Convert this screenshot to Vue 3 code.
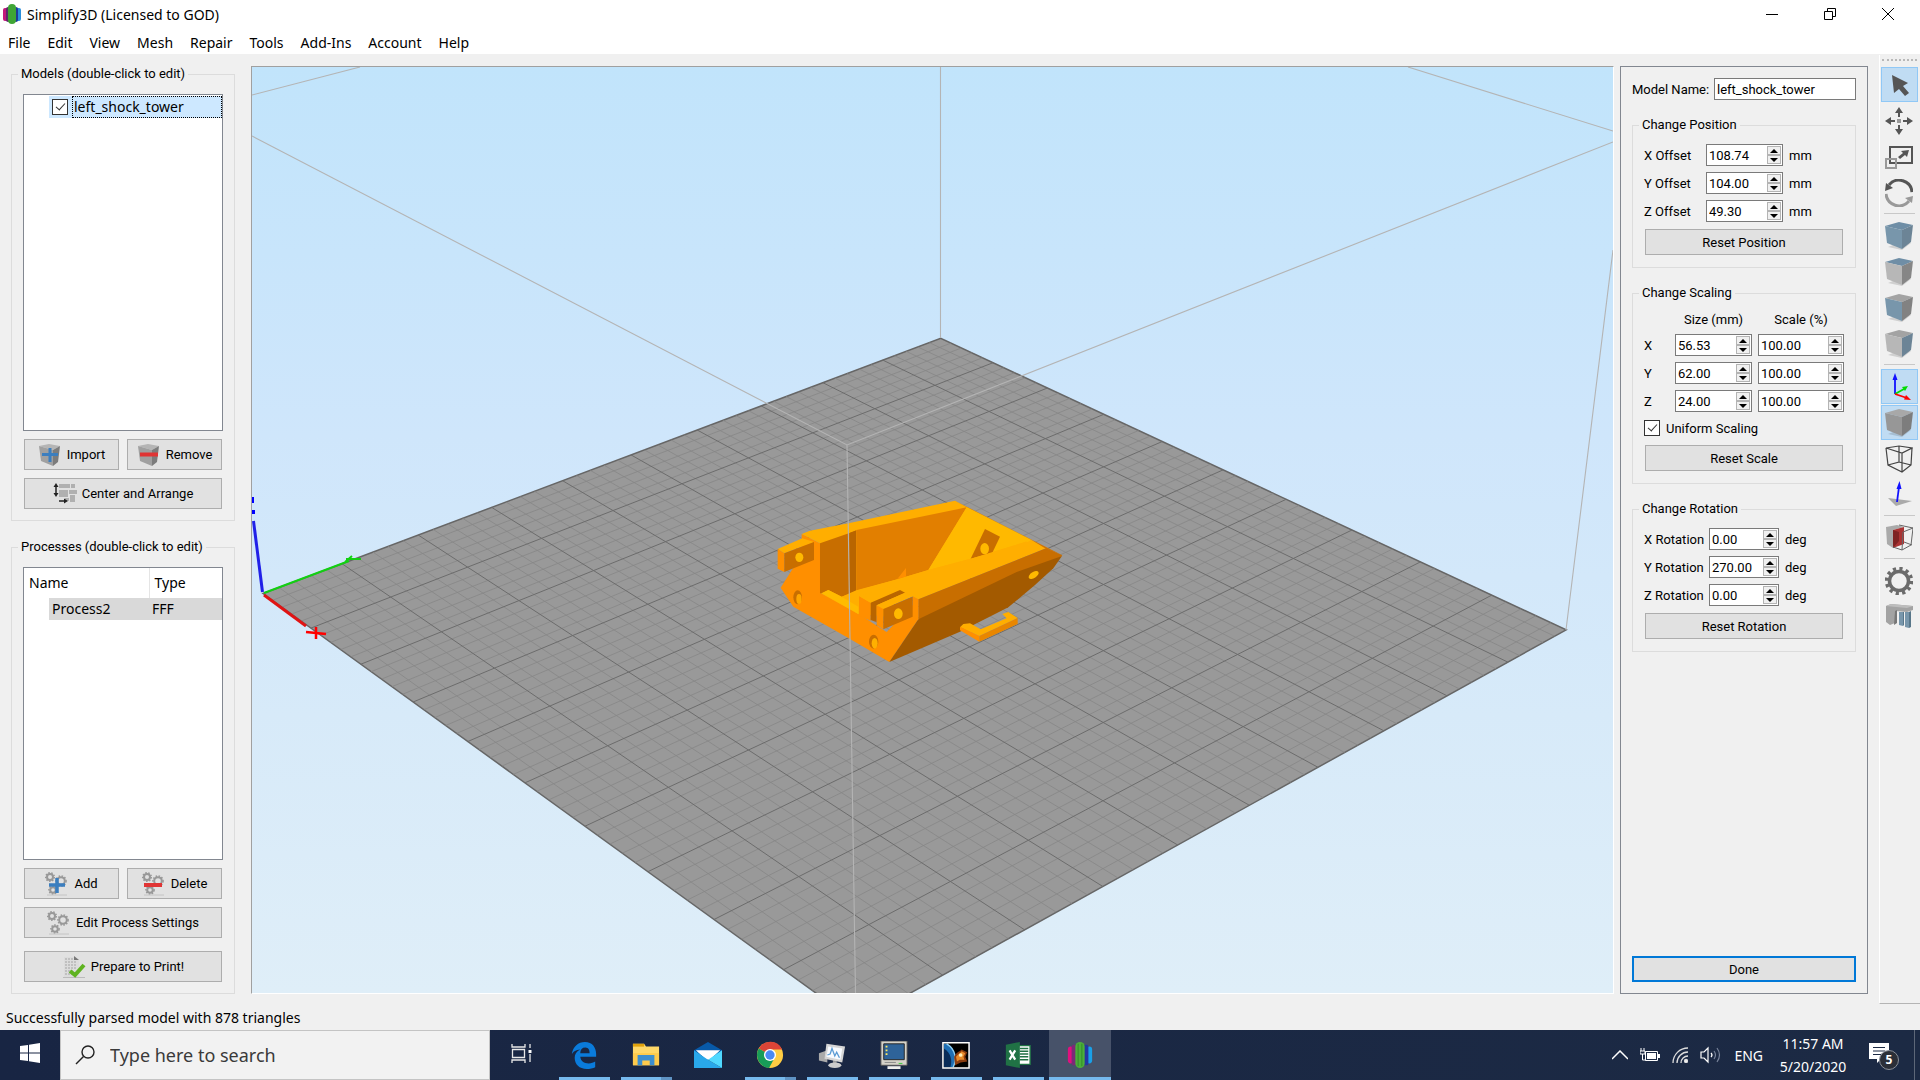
<script setup>
import { ref, reactive } from 'vue'

const menus = ['File', 'Edit', 'View', 'Mesh', 'Repair', 'Tools', 'Add-Ins', 'Account', 'Help']

const modelName = ref('left_shock_tower')
const modelVisible = ref(true)
const uniform = ref(true)
const search = ref('')

const offsets = reactive([
  { axis: 'X', value: '108.74' },
  { axis: 'Y', value: '104.00' },
  { axis: 'Z', value: '49.30' }
])
const scales = reactive([
  { axis: 'X', size: '56.53', scale: '100.00' },
  { axis: 'Y', size: '62.00', scale: '100.00' },
  { axis: 'Z', size: '24.00', scale: '100.00' }
])
const rotations = reactive([
  { axis: 'X', value: '0.00' },
  { axis: 'Y', value: '270.00' },
  { axis: 'Z', value: '0.00' }
])

function step(row, key, delta) {
  row[key] = (Number(row[key]) + delta).toFixed(2)
}

function reset(rows, key, value) {
  rows.forEach(r => { r[key] = value })
}

// toolbar
const tools = [
  { id: 'select', title: 'Select', on: true },
  { id: 'move', title: 'Move' },
  { id: 'scale', title: 'Scale' },
  { id: 'rotate', title: 'Rotate', sep: true },
  { id: 'cube', title: 'Default view', top: '#6f8ea6', left: '#7896ab', right: '#6c8496' },
  { id: 'cube', title: 'Top view', top: '#6f8ea6', left: '#b7b7b7', right: '#868686' },
  { id: 'cube', title: 'Front view', top: '#a3a3a3', left: '#7896ab', right: '#828282' },
  { id: 'cube', title: 'Side view', top: '#a3a3a3', left: '#b7b7b7', right: '#6c8496', sep: true },
  { id: 'axes', title: 'Coordinate axes', on: true },
  { id: 'cube', title: 'Solid model', on: true, top: '#a8a8a8', left: '#979797', right: '#7d7d7d' },
  { id: 'wire', title: 'Wireframe' },
  { id: 'normal', title: 'Normals', sep: true },
  { id: 'section', title: 'Cross section', sep: true },
  { id: 'gear', title: 'Machine control' },
  { id: 'support', title: 'Supports' }
]

const apps = [
  { id: 'edge', open: true },
  { id: 'files', open: true, more: true },
  { id: 'mail' },
  { id: 'chrome', open: true, more: true },
  { id: 'monitor', open: true },
  { id: 'remote', open: true },
  { id: 'photo', open: true },
  { id: 'excel', open: true },
  { id: 'simplify', open: true, active: true }
]

// build plate corners on screen: origin, +x, +x+y, +y
const corners = [[263, 593.5], [856.9, 1022.7], [1566.2, 629.8], [940.7, 338.3]]

function project(u, v) {
  const [[x0, y0], [x1, y1], [x2, y2], [x3, y3]] = corners
  const dx1 = x1 - x2, dx2 = x3 - x2, sx = x0 - x1 + x2 - x3
  const dy1 = y1 - y2, dy2 = y3 - y2, sy = y0 - y1 + y2 - y3
  const det = dx1 * dy2 - dx2 * dy1
  const g = (sx * dy2 - dx2 * sy) / det
  const h = (dx1 * sy - sx * dy1) / det
  const w = g * u + h * v + 1
  const x = ((x1 - x0 + g * x1) * u + (x3 - x0 + h * x3) * v + x0) / w
  const y = ((y1 - y0 + g * y1) * u + (y3 - y0 + h * y3) * v + y0) / w
  return `${x.toFixed(1)} ${y.toFixed(1)}`
}

function gridPath(major) {
  let d = ''
  for (let i = 1; i < 50; i++) {
    if ((i % 5 === 0) !== major) continue
    const t = i / 50
    d += `M${project(t, 0)}L${project(t, 1)}M${project(0, t)}L${project(1, t)}`
  }
  return d
}

const plate = corners.map(c => c.join(',')).join(' ')
const minorGrid = gridPath(false)
const majorGrid = gridPath(true)

const gears = [[5, 5, 3], [16, 9, 3.8], [8, 18, 2.8]]
</script>

<template>
  <div class="app">
    <header class="titlebar">
      <svg class="logo" viewBox="0 0 18 20">
        <rect x="0" y="4" width="5" height="13" rx="2" fill="#c2187a" />
        <rect x="3" y="3" width="4" height="15" rx="2" fill="#5d2a6b" />
        <rect x="13" y="4" width="5" height="13" rx="2" fill="#2b8fdc" />
        <rect x="11" y="3" width="4" height="15" rx="2" fill="#1f3a98" />
        <rect x="5" y="0" width="8" height="20" rx="4" fill="#3fa535" />
      </svg>
      <span class="title">Simplify3D (Licensed to GOD)</span>
      <div class="window-buttons">
        <button type="button" aria-label="Minimize"><svg viewBox="0 0 12 12"><path d="M0 6.500h12" /></svg></button>
        <button type="button" aria-label="Restore"><svg viewBox="0 0 12 12"><path d="M.5 3.500h8v8h-8zM3.500 3.500v-3h8v8h-3" /></svg></button>
        <button type="button" aria-label="Close"><svg viewBox="0 0 12 12"><path d="M0 0l12 12M12 0L0 12" /></svg></button>
      </div>
    </header>

    <nav class="menubar">
      <button v-for="m in menus" :key="m" type="button">{{ m }}</button>
    </nav>

    <main class="main">
      <aside class="sidebar">
        <fieldset class="group fill">
          <legend>Models (double-click to edit)</legend>
          <div class="list">
            <div class="tree-row">
              <input id="model-0" v-model="modelVisible" type="checkbox" class="check">
              <label for="model-0">left_shock_tower</label>
            </div>
          </div>
          <div class="btn-row">
            <button type="button" class="btn tall">
              <svg class="btn-icon" viewBox="0 0 24 24">
                <path d="M1 3l10-2 11 2-7 4z" fill="#b5b5b5" /><path d="M1 3l14 4v16L3 18z" fill="#a0a0a0" /><path d="M22 3l-7 4v16l5-4z" fill="#7c7c7c" />
                <path d="M12 5v14M4 11.500h16" stroke="#3b7ebf" stroke-width="3" />
              </svg>
              Import
            </button>
            <button type="button" class="btn tall">
              <svg class="btn-icon" viewBox="0 0 24 24">
                <path d="M1 3l10-2 11 2-7 4z" fill="#b5b5b5" /><path d="M1 3l14 4v16L3 18z" fill="#a0a0a0" /><path d="M22 3l-7 4v16l5-4z" fill="#7c7c7c" />
                <path d="M3 11.500h18" stroke="#e03434" stroke-width="4" />
              </svg>
              Remove
            </button>
          </div>
          <button type="button" class="btn tall">
            <svg class="btn-icon" viewBox="0 0 24 24">
              <path d="M6 2h11v4H6zM18 2h4v4h-4zM6 8h9v7H6zM16 8h8v4h-8zM12 16h4v3h-4zM17 13h5v7h-5z" fill="#b0b0b0" />
              <path d="M3 4v9M6 19h6" stroke="#222" stroke-width="1.500" />
              <path d="M3 1l2.500 4h-5zM3 15l2.500-4h-5zM15 19l-4-2.500v5z" fill="#222" />
            </svg>
            Center and Arrange
          </button>
        </fieldset>

        <fieldset class="group fill">
          <legend>Processes (double-click to edit)</legend>
          <div class="list">
            <table class="processes">
              <thead>
                <tr><th>Name</th><th>Type</th></tr>
              </thead>
              <tbody>
                <tr><td><span>Process2</span></td><td><span>FFF</span></td></tr>
              </tbody>
            </table>
          </div>
          <div class="btn-row">
            <button type="button" class="btn tall">
              <svg class="btn-icon" viewBox="0 0 24 24">
                <g v-for="[x, y, r] in gears" :key="x" class="cog">
                  <circle :cx="x" :cy="y" :r="r" /><circle class="teeth" :cx="x" :cy="y" :r="r + 1.3" />
                </g>
                <path d="M2 23h20" stroke="#c4c4c4" />
                <path d="M12 6v15M4 13h16" stroke="#3b7ebf" stroke-width="3.500" />
              </svg>
              Add
            </button>
            <button type="button" class="btn tall">
              <svg class="btn-icon" viewBox="0 0 24 24">
                <g v-for="[x, y, r] in gears" :key="x" class="cog">
                  <circle :cx="x" :cy="y" :r="r" /><circle class="teeth" :cx="x" :cy="y" :r="r + 1.3" />
                </g>
                <path d="M2 23h20" stroke="#c4c4c4" />
                <path d="M2 13h18" stroke="#e03434" stroke-width="4" />
              </svg>
              Delete
            </button>
          </div>
          <button type="button" class="btn tall">
            <svg class="btn-icon" viewBox="0 0 24 24">
              <g v-for="[x, y, r] in gears" :key="x" class="cog">
                <circle :cx="x" :cy="y" :r="r" /><circle class="teeth" :cx="x" :cy="y" :r="r + 1.3" />
              </g>
              <path d="M2 23h20" stroke="#c4c4c4" />
            </svg>
            Edit Process Settings
          </button>
          <button type="button" class="btn tall prepare">
            <svg class="btn-icon" viewBox="0 0 24 24">
              <path d="M2 2h11l4 4v16H2z" fill="#dcdcdc" />
              <path d="M3 4h8M3 7h12M3 10h12M3 13h12M3 16h9M3 19h9" stroke="#a4a4a4" stroke-dasharray="2 1" />
              <path d="M12 1l5 4h-5z" fill="#777" />
              <path d="M1 22.500h22" stroke="#bbb" />
              <path d="M8 16l5 4 9-10" fill="none" stroke="#5fb321" stroke-width="4" />
            </svg>
            Prepare to Print!
          </button>
        </fieldset>
      </aside>

      <section class="viewport">
        <svg viewBox="252 67 1361 926" preserveAspectRatio="xMidYMid slice">
          <defs>
            <linearGradient id="sky" x1="0" y1="0" x2="0" y2="1">
              <stop offset="0" stop-color="#c1e4fb" />
              <stop offset=".4" stop-color="#cfe6fb" />
              <stop offset=".7" stop-color="#d7eaf9" />
              <stop offset="1" stop-color="#dfeef8" />
            </linearGradient>
          </defs>
          <rect x="252" y="67" width="1361" height="926" fill="url(#sky)" />

          <!-- build plate -->
          <polygon :points="plate" fill="#999" stroke="#666" stroke-width="1.500" />
          <path :d="minorGrid" fill="none" stroke="#868686" stroke-width=".8" />
          <path :d="majorGrid" fill="none" stroke="#6c6c6c" />

          <!-- back edges of the build volume -->
          <path class="volume" d="M940.500 67V338M252 95L360 67M1408 67l205 64M1566 630L1613 250" />

          <!-- model -->
          <g transform="translate(740 460) scale(.33333)">
            <path fill="#ff8f00" d="M185 222L240 250V398L305 430L440 516L535 418V478L448 606L325 534L160 440L122 383L157 328L185 300Z" />
            <path fill="#ffae00" d="M185 222L210 212L340 187L645 122L682 142L915 265L535 418L480 390L440 470L355 462L240 398V250Z" />
            <path fill="#c86e00" d="M240 250L348 212V395L305 410L265 390L245 400H240Z" />
            <path fill="#b96500" d="M330 218L349 211V392L330 400Z" />
            <path fill="#e27f00" d="M349 210L680 142L565 330L475 357L349 392Z" />
            <path fill="#ff8f00" d="M472 357L498 324V350Z" />
            <path fill="#ffb900" d="M680 142L875 240L692 296L565 330Z" />
            <path fill="#c86e00" d="M735 207L780 230L757 278L692 296Z" />
            <ellipse cx="734" cy="266" rx="13" ry="17" fill="#ffb900" />
            <path fill="#ffae00" d="M349 391L475 357L565 330L692 296L875 240L918 265L535 418L480 390L357 408L355 462L305 410Z" />
            <path fill="#ffbb00" d="M265 390L305 410L355 440V462L245 400Z" />
            <path fill="#ffb900" d="M682 142L875 240L862 246L680 145Z" />
            <path fill="#d27400" d="M645 122L967 286L915 265L875 240L682 142Z" />
            <path fill="#c86e00" d="M535 418L918 265L967 286L960 292L830 340L535 480Z" />
            <path fill="#a35a00" d="M535 478L830 336L966 288L940 325L885 375L805 442L660 515L448 606Z" />
            <path fill="#ff8f00" d="M357 408L392 428V482L357 468Z" />
            <path fill="#ffae00" d="M357 408L460 378L518 408L430 447L392 428Z" />
            <path fill="#b96500" d="M392 428L480 390L495 398L410 436V486L392 480Z" />
            <path fill="#ffae00" d="M410 436L495 398L518 409L430 447Z" />
            <path fill="#ff8f00" d="M410 436L430 447V508L410 496ZM518 409L535 418V480L518 470Z" />
            <path fill="#c86e00" d="M430 447L518 410V470L430 508Z" />
            <ellipse cx="475" cy="461" rx="13" ry="16" fill="#ffb900" />
            <path fill="#ffae00" d="M113 267L187 235L222 246L133 280Z" />
            <path fill="#ff8f00" d="M113 267L133 280V336L113 326Z" />
            <path fill="#c86e00" d="M133 280L222 246V300L133 336Z" />
            <ellipse cx="178" cy="292" rx="12" ry="14" fill="#ffb900" />
            <ellipse cx="173" cy="412" rx="13" ry="21" fill="#c86e00" />
            <ellipse cx="177" cy="417" rx="8" ry="15" fill="#ffa600" />
            <ellipse cx="401" cy="545" rx="14" ry="21" fill="#c86e00" />
            <ellipse cx="404" cy="550" rx="9" ry="16" fill="#ffb000" />
            <ellipse cx="881" cy="345" rx="17" ry="9" transform="rotate(-33 881 345)" fill="#ffb900" />
            <path fill="#ffae00" d="M670 492L690 490L722 508L800 475L787 462L805 456L833 474L718 528L660 502Z" />
            <path fill="#e88600" d="M833 474V492L718 545V528Z" />
            <path fill="#ff8f00" d="M718 528V545L660 511V500Z" />
          </g>

          <!-- front edges of the build volume -->
          <path class="volume" d="M252 136L847 445L1613 142M847 445L855.500 993" />

          <!-- axes -->
          <path d="M262.500 592L253.500 521" stroke="#2020e8" stroke-width="3" />
          <path d="M252 497v6M252 512h3" stroke="#00f" stroke-width="4" />
          <path d="M264 593L349 561M345 562l7-6M346 559h15" stroke="#12d012" stroke-width="2" />
          <path d="M264 595L306 626" stroke="#e01414" stroke-width="3" />
          <path d="M306 632l20 2M316 627v12" stroke="#f00" stroke-width="2.500" />
        </svg>
      </section>

      <section class="panel">
        <div class="name-row">
          <label for="model-name">Model Name:</label>
          <input id="model-name" v-model="modelName" type="text">
        </div>

        <fieldset class="group">
          <legend>Change Position</legend>
          <div v-for="row in offsets" :key="row.axis" class="field-row offset">
            <label :for="'offset-' + row.axis">{{ row.axis }} Offset</label>
            <div class="spin">
              <input :id="'offset-' + row.axis" v-model="row.value" type="text">
              <div class="arrows">
                <button type="button" aria-label="Up" @click="step(row, 'value', 1)"></button>
                <button type="button" aria-label="Down" @click="step(row, 'value', -1)"></button>
              </div>
            </div>
            <span>mm</span>
          </div>
          <button type="button" class="btn" @click="reset(offsets, 'value', '0.00')">Reset Position</button>
        </fieldset>

        <fieldset class="group">
          <legend>Change Scaling</legend>
          <div class="scale-row scale-head">
            <span></span><span>Size (mm)</span><span>Scale (%)</span>
          </div>
          <div v-for="row in scales" :key="row.axis" class="scale-row">
            <label :for="'size-' + row.axis">{{ row.axis }}</label>
            <div v-for="key in ['size', 'scale']" :key="key" class="spin">
              <input :id="key + '-' + row.axis" v-model="row[key]" type="text" :aria-label="row.axis + ' ' + key">
              <div class="arrows">
                <button type="button" aria-label="Up" @click="step(row, key, 1)"></button>
                <button type="button" aria-label="Down" @click="step(row, key, -1)"></button>
              </div>
            </div>
          </div>
          <div class="check-row">
            <input id="uniform" v-model="uniform" type="checkbox" class="check">
            <label for="uniform">Uniform Scaling</label>
          </div>
          <button type="button" class="btn" @click="reset(scales, 'scale', '100.00')">Reset Scale</button>
        </fieldset>

        <fieldset class="group">
          <legend>Change Rotation</legend>
          <div v-for="row in rotations" :key="row.axis" class="field-row rotation">
            <label :for="'rotation-' + row.axis">{{ row.axis }} Rotation</label>
            <div class="spin">
              <input :id="'rotation-' + row.axis" v-model="row.value" type="text">
              <div class="arrows">
                <button type="button" aria-label="Up" @click="step(row, 'value', 1)"></button>
                <button type="button" aria-label="Down" @click="step(row, 'value', -1)"></button>
              </div>
            </div>
            <span>deg</span>
          </div>
          <button type="button" class="btn" @click="reset(rotations, 'value', '0.00')">Reset Rotation</button>
        </fieldset>

        <button type="button" class="btn done">Done</button>
      </section>

      <div class="toolbar">
        <div class="grip"></div>
        <template v-for="(t, i) in tools" :key="i">
          <button type="button" :class="['tool', t.on && 'on']" :aria-label="t.title">
            <svg viewBox="0 0 28 28">
              <path v-if="t.id === 'select'" d="M7 4L23 12L18 15L24 22L20 25L14 18L9 22Z" fill="#555" />
              <g v-else-if="t.id === 'move'" fill="#555">
                <path d="M14 0l4 6h-3v4h-2V6h-3zM14 28l4-6h-3v-4h-2v4h-3zM0 14l6-4v3h4v2H6v3zM28 14l-6-4v3h-4v2h4v3z" />
                <path d="M12 12h4v4h-4z" fill="#999" />
              </g>
              <g v-else-if="t.id === 'scale'" fill="none" stroke-width="2">
                <path d="M5 4h22v16H5z" stroke="#555" />
                <path d="M1 16h10v9H1z" stroke="#999" />
                <path d="M24 7l-2 7-2-2-5 4-2-2 5-4-2-2z" fill="#555" />
              </g>
              <g v-else-if="t.id === 'rotate'" fill="none" stroke-width="3">
                <path d="M27 13A13 13 0 0 0 4 6" stroke="#555" />
                <path d="M1 15A13 13 0 0 0 24 22" stroke="#999" />
                <path d="M0 12l1-8 7 5z" fill="#555" stroke="none" /><path d="M28 17l-1 7-7-5z" fill="#999" stroke="none" />
              </g>
              <g v-else-if="t.id === 'cube'">
                <path d="M3 25l14 3 9-7-8-2z" fill="#0002" />
                <path d="M0 4L14 0L28 3L17 8Z" :fill="t.top" />
                <path d="M0 4L17 8V27L2 21Z" :fill="t.left" />
                <path d="M28 3L17 8V27L26 20Z" :fill="t.right" />
              </g>
              <g v-else-if="t.id === 'axes'" fill="none" stroke-width="1.800">
                <path d="M10 21V5" stroke="#11f" /><path d="M10 0l2.500 7h-5z" fill="#11f" />
                <path d="M10 21l9-5" stroke="#0d0" /><path d="M23 13l-3 5-3-4z" fill="#0d0" />
                <path d="M10 21l12 4" stroke="#f00" /><path d="M26 27l-7-.5 2-4.500z" fill="#f00" />
              </g>
              <path v-else-if="t.id === 'wire'" d="M1 3L14 1L27 3L17 8ZM1 3L3 20L17 27L26 20L27 3M17 8V27M14 1V17L3 20M14 17L26 20" fill="none" stroke="#444" stroke-width="1.200" />
              <g v-else-if="t.id === 'normal'">
                <path d="M3 17L27 20L11 25Z" fill="#aaa" />
                <path d="M12 21L14 6" stroke="#11f" stroke-width="1.800" /><path d="M14.500 0l2 8h-5z" fill="#11f" />
              </g>
              <g v-else-if="t.id === 'section'">
                <path d="M1 3L12 1L19 3L8 6V24L2 20Z" fill="#aaa" />
                <path d="M8 6L19 3V20L8 24Z" fill="#a33" /><path d="M8 6l6 2v9l-6 7z" fill="#7f2222" />
                <path d="M14 1L28 4L18 8M28 4L26 21L17 26L8 23M18 8L17 26M19 18L27 21" fill="none" stroke="#666" stroke-width="1" />
              </g>
              <g v-else-if="t.id === 'gear'" fill="none" stroke="#6b6b6b">
                <circle cx="14" cy="14" r="9.500" stroke-width="3.500" />
                <circle cx="14" cy="14" r="12.500" stroke-width="3.500" stroke-dasharray="3.200 3.345" />
              </g>
              <g v-else>
                <path d="M1 3L6 1L28 3V7L22 9L10 8V20L5 22L1 19Z" fill="#a3a3a3" /><path d="M1 3L6 1L28 3L22 5Z" fill="#bdbdbd" />
                <path d="M10 8l2-1v13l-3 2z" fill="#777" />
                <path d="M14 9h4v14l-4-1zM20 9h4v16l-4-1z" fill="#7896ab" /><path d="M18 9v14l1-1V9zM24 9v16l2-1V8z" fill="#587689" />
              </g>
            </svg>
          </button>
          <div v-if="t.sep" class="sep"></div>
        </template>
      </div>
    </main>

    <footer class="statusbar">Successfully parsed model with 878 triangles</footer>

    <div class="taskbar">
      <button type="button" class="start" aria-label="Start">
        <svg viewBox="0 0 20 20"><path d="M0 3l8-1v7.500H0zM9 1.800L20 0v9.500H9zM0 10.500h8V18l-8-1zM9 10.500h11V20L9 18.200z" fill="#fff" /></svg>
      </button>
      <div class="search">
        <svg viewBox="0 0 20 20"><circle cx="13" cy="7" r="6" fill="none" stroke="#222" stroke-width="1.400" /><path d="M8.500 11.500L1 19" stroke="#222" stroke-width="1.400" /></svg>
        <input v-model="search" type="text" placeholder="Type here to search" aria-label="Search">
      </div>
      <button type="button" class="task-view" aria-label="Task view">
        <svg viewBox="0 0 22 20" fill="none" stroke="#e8e8e8" stroke-width="1.300">
          <path d="M1 1v3h13V1M1.500 6.500h12v8H1.500zM1 20v-3h13v3M19 1v4M19 11v8" /><path d="M17.500 7h3v3h-3z" fill="#fff" stroke="none" />
        </svg>
      </button>
      <button v-for="a in apps" :key="a.id" type="button" :aria-label="a.id" :class="['app-btn', a.open && 'open', a.more && 'more', a.active && 'active']">
        <svg viewBox="0 0 30 30">
          <path v-if="a.id === 'edge'" fill="#0a7bdb" d="M2 14C3 6 9 1 16 1c8 0 12 6 12 13v3H11c.5 5 4 7 9 7 3 0 5-.8 7-2v6c-2 1-6 2-9 2C10 30 5 25 5 18c0-4 2-7 6-9-5 .5-7 2-9 5zm9-1h10c0-3-1-6-4.500-6S11 9 11 13z" />
          <g v-else-if="a.id === 'files'">
            <path d="M1 3h12l2 3h14v20H1z" fill="#ffd868" /><path d="M1 3h12v3H1z" fill="#e0a10b" /><path d="M1 13h28v13H1z" fill="#ffcb4c" />
            <path d="M6 26V15h18v11h-5v-5h-8v5z" fill="#3d8fd0" />
          </g>
          <g v-else-if="a.id === 'mail'">
            <path d="M0 10L15 1l15 9v5H0z" fill="#0859a8" /><path d="M2 10h26l-11 10h-4z" fill="#fff" />
            <path d="M0 10l15 10L30 29H0z" fill="#29a8ea" /><path d="M30 10L15 20l15 9z" fill="#50d9ff" />
          </g>
          <g v-else-if="a.id === 'chrome'">
            <circle cx="15" cy="15" r="14" fill="#ffcd43" />
            <path d="M15 15L3 8A14 14 0 0 1 28 9H15z" fill="#dc4437" /><path d="M15 15L3 8A14 14 0 0 0 14 29l6-11z" fill="#189c58" />
            <circle cx="15" cy="15" r="6.500" fill="#fff" /><circle cx="15" cy="15" r="5" fill="#4a8af4" />
          </g>
          <g v-else-if="a.id === 'monitor'">
            <path d="M1 13l9-3v13l-9-2z" fill="#aaa" /><path d="M16 20l4 1v4h-4z" fill="#999" /><ellipse cx="18" cy="26" rx="7" ry="3" fill="#ccc" />
            <path d="M9 3l20 3-3 17-19-4z" fill="#d6d6d6" /><path d="M11 6l15 2-2 12-15-3z" fill="#f8fbff" />
            <path d="M10 15l3-1 2-6 3 8 2-4 3 6" fill="none" stroke="#5a9bd4" stroke-width="1.400" />
          </g>
          <g v-else-if="a.id === 'remote'">
            <path d="M1 0h28v26H1z" fill="#d5d2c9" stroke="#555" /><path d="M4 3h22v17H4z" fill="#2e6399" stroke="#222" />
            <path d="M6 5h2v2H6zM6 9h2v2H6zM6 13h2v2H6z" fill="#ffe95e" /><path d="M5 23h12" stroke="#888" /><path d="M20 24h4" stroke="#3c3" />
            <path d="M8 27h14v3H8z" fill="#eee" />
          </g>
          <g v-else-if="a.id === 'photo'">
            <path d="M1 2h28v27H1z" fill="#000" />
            <path d="M2 3h4C15 9 16 20 12 28H2z" fill="#1f6fb5" /><path d="M2 8C10 13 11 21 9 28H2z" fill="#0a2c58" />
            <path d="M5 3c10 6 11 17 7 25" fill="none" stroke="#8fd0f5" stroke-width="1.500" />
            <path d="M13 17c2-5 5-5 8-8l6 3-2 5 2 5-7 1-6 3z" fill="#8a3c10" />
            <path d="M15 17c2-3 4-3 6-6l4 2-2 4 1 3-5 0-3 2z" fill="#e98a2a" /><circle cx="20" cy="15" r="2" fill="#fff0b8" />
            <path d="M1 2h28v27H1z" fill="none" stroke="#fff" stroke-width="1.600" />
          </g>
          <g v-else-if="a.id === 'excel'">
            <path d="M15 5h13v20H15z" fill="#fff" stroke="#207245" stroke-width="1.500" />
            <path d="M17 8h9M17 11h9M17 14h9M17 17h9M17 20h9" stroke="#207245" stroke-width="1.600" />
            <path d="M2 4l15-3v28L2 26z" fill="#207245" /><path d="M6 10l6 10M12 10L6 20" stroke="#fff" stroke-width="2.400" />
          </g>
          <g v-else>
            <rect x="2" y="6" width="6" height="18" rx="3" fill="#e0107e" /><rect x="6" y="4" width="5" height="22" rx="2" fill="#7a2a78" />
            <rect x="22" y="6" width="6" height="18" rx="3" fill="#1aa0e8" /><rect x="19" y="4" width="5" height="22" rx="2" fill="#2436a0" />
            <rect x="10" y="1" width="10" height="28" rx="5" fill="#4caf3a" /><path d="M13 3v24M17 3v24" stroke="#2f8a28" />
          </g>
        </svg>
      </button>
      <div class="tray">
        <svg width="16" height="10" viewBox="0 0 16 10"><path d="M0 9l8-8 8 8" fill="none" stroke="#fff" stroke-width="1.500" /></svg>
        <svg width="20" height="14" viewBox="0 0 20 14">
          <path d="M1 0v3M4 0v3M0 3h5v3H0zM2.500 6v6H6" fill="none" stroke="#fff" /><path d="M5.500 3.500h12v9h-12z" fill="none" stroke="#fff" /><path d="M7 5h9v6H7zM18 6h2v4h-2z" fill="#fff" />
        </svg>
        <svg width="16" height="16" viewBox="0 0 16 16" fill="none" stroke="#ddd" stroke-width="1.300">
          <path d="M1 16A15 15 0 0 1 16 1M5 16A11 11 0 0 1 16 5M9 16a7 7 0 0 1 7-7" /><circle cx="14" cy="14" r="1.500" fill="#fff" />
        </svg>
        <svg width="22" height="18" viewBox="0 0 22 18" fill="none" stroke="#fff" stroke-width="1.200">
          <path d="M1 6h3l4-4v14l-4-4H1zM11 7q2 2 0 4" /><path d="M14 5q3 4 0 8M17 2q5 7 0 14" stroke="#77839a" />
        </svg>
        <span class="lang">ENG</span>
        <div class="clock"><span>11:57 AM</span><span>5/20/2020</span></div>
        <button type="button" class="notify" aria-label="Notifications">
          <svg viewBox="0 0 20 20"><path d="M0 0h20v16H12l-4 4v-4H0z" fill="#fff" /><path d="M4 4.500h12M4 8h12M4 11.500h8" stroke="#1c2a44" stroke-width="1.200" /></svg>
          <span class="badge">5</span>
        </button>
      </div>
    </div>
  </div>
</template>

<style>
body {
  background: #f0f0f0;
}
</style>

<style scoped>
.app {
  display: flex;
  flex-direction: column;
  min-height: 100vh;
  font-family: Roboto, "Noto Sans", sans-serif;
  font-size: 13px;
  color: #000;
  background: #f0f0f0;
}

*, *::before {
  box-sizing: border-box;
}

button, input {
  font: inherit;
  color: inherit;
  margin: 0;
  padding: 0;
}

.titlebar {
  display: flex;
  align-items: center;
  height: 28px;
  padding-left: 3px;
  background: #fff;
  font-family: "Noto Sans", sans-serif;
  font-size: 14px;
}

.logo {
  width: 18px;
  height: 20px;
}

.title {
  flex: 1;
  margin-left: 6px;
}

.window-buttons {
  display: flex;
  margin-right: 3px;
}

.window-buttons button {
  width: 58px;
  height: 28px;
  border: none;
  background: none;
}

.window-buttons svg {
  width: 12px;
  height: 12px;
  fill: none;
  stroke: #000;
}

.menubar {
  display: flex;
  gap: 1px;
  height: 26px;
  background: #fff;
  font-family: "Noto Sans", sans-serif;
  font-size: 14px;
}

.menubar button {
  padding: 2px 8px 0;
  border: none;
  background: none;
}

.main {
  flex: 1;
  display: flex;
}

.sidebar {
  display: flex;
  flex-direction: column;
  gap: 18px;
  width: 251px;
  padding: 12px 16px 10px 11px;
}

.group {
  display: flex;
  flex-direction: column;
  min-width: 0;
  margin: 0;
  padding: 12px 11px 11px;
  border: 1px solid #dcdcdc;
}

.group legend {
  margin-left: -5px;
  padding: 0 3px;
  line-height: 16px;
}

.fill {
  flex: 1;
}

.list {
  flex: 1;
  border: 1px solid #828790;
  background: #fff;
  font-family: "Noto Sans", sans-serif;
  font-size: 14px;
}

.tree-row {
  display: flex;
  align-items: center;
  gap: 4px;
  height: 22px;
  margin: 1px 0 0 25px;
  padding-left: 3px;
  background: #cde8ff;
}

.tree-row label {
  flex: 1;
  line-height: 20px;
  padding-left: 1px;
  border: 1px dotted #000;
}

.check {
  appearance: none;
  flex: none;
  width: 16px;
  height: 16px;
  border: 1px solid #333;
  background: #fff;
}

.check:checked::before {
  content: '';
  display: block;
  width: 5px;
  height: 9px;
  margin: 1px 0 0 5px;
  border: solid #333;
  border-width: 0 1px 1px 0;
  transform: rotate(42deg);
}

.processes {
  width: 100%;
  border-collapse: collapse;
  table-layout: fixed;
}

.processes th {
  height: 30px;
  padding: 0 0 2px 5px;
  text-align: left;
  font-weight: normal;
}

.processes th:first-child {
  width: 125px;
  border-right: 1px solid #e5e5e5;
}

.processes td {
  height: 22px;
  padding: 0;
  line-height: 22px;
}

.processes td span {
  display: block;
  padding-left: 3px;
  background: #d9d9d9;
}

.processes td:first-child span {
  margin-left: 25px;
}

.btn-row {
  display: flex;
  gap: 6px;
}

.btn-row .btn {
  flex: 1 0 0;
}

.btn {
  display: flex;
  align-items: center;
  justify-content: center;
  gap: 5px;
  height: 26px;
  margin: 7px 1px 0;
  border: 1px solid #adadad;
  background: #e1e1e1;
}

.tall {
  height: 31px;
  margin-top: 8px;
}

.prepare {
  margin-top: 13px;
}

.btn-icon {
  width: 24px;
  height: 24px;
}

.cog circle {
  fill: none;
  stroke: #989898;
  stroke-width: 2;
}

.cog .teeth {
  stroke-width: 1.5;
  stroke-dasharray: 1.5 1.5;
}

.viewport {
  flex: 1;
  min-width: 0;
  margin: 12px 0 10px;
  border: 1px solid #a0a0a0;
  border-color: #a0a0a0 #fff #fff #a0a0a0;
  position: relative;
}

.viewport svg {
  position: absolute;
  width: 100%;
  height: 100%;
}

.volume {
  fill: none;
  stroke: #b4b4b4;
  stroke-width: 1.1;
}

.panel {
  display: flex;
  flex-direction: column;
  gap: 17px;
  width: 248px;
  margin: 12px 11px 10px 6px;
  padding: 11px;
  border: 1px solid #828790;
}

.panel .group {
  padding: 11px 11px 12px;
}

.panel label {
  white-space: nowrap;
}

.name-row {
  display: flex;
  align-items: center;
  justify-content: space-between;
}

.name-row input {
  width: 142px;
  height: 22px;
  padding: 0 2px;
  border: 1px solid #7a7a7a;
  background: #fff;
}

.field-row {
  display: grid;
  align-items: center;
  column-gap: 6px;
  margin-bottom: 6px;
}

.field-row + .btn {
  margin-top: 1px;
}

.offset {
  grid-template-columns: 56px 77px 1fr;
}

.rotation {
  grid-template-columns: 59px 70px 1fr;
}

.scale-row {
  display: grid;
  grid-template-columns: 25px 77px 86px;
  column-gap: 6px;
  align-items: center;
  margin-bottom: 6px;
}

.scale-head {
  line-height: 16px;
  text-align: center;
}

.spin {
  display: flex;
  height: 22px;
  padding: 1px;
  border: 1px solid #7a7a7a;
  background: #fff;
}

.spin input {
  flex: 1;
  min-width: 0;
  padding-left: 1px;
  border: none;
  background: none;
}

.arrows {
  display: flex;
  flex-direction: column;
  width: 14px;
}

.arrows button {
  flex: 1;
  display: flex;
  align-items: center;
  justify-content: center;
  border: 1px solid #b4b4b4;
  background: #f0f0f0;
}

.arrows button::before {
  content: '';
  border: solid transparent;
  border-width: 0 4px 4px;
  border-bottom-color: #000;
}

.arrows button:last-child::before {
  border-width: 4px 4px 0;
  border-top-color: #000;
}

.check-row {
  display: flex;
  align-items: center;
  gap: 6px;
  height: 20px;
}

.panel .done {
  margin: auto 0 0;
  border: 2px solid #0078d7;
}

.toolbar {
  display: flex;
  flex-direction: column;
  align-items: center;
  gap: 1px;
  width: 41px;
  margin-top: 1px;
  padding: 4px 2px 0 0;
  border-left: 1px solid #fff;
  border-bottom: 1px solid #b4b4b4;
}

.grip {
  width: 35px;
  height: 7px;
  border-top: 2px dotted #b8b8b8;
}

.tool {
  display: flex;
  align-items: center;
  justify-content: center;
  width: 37px;
  height: 35px;
  border: 1px solid transparent;
  background: none;
}

.tool.on {
  border-color: #90c8f6;
  background: #c0dcf3;
}

.tool svg {
  width: 28px;
  height: 28px;
}

.sep {
  width: 31px;
  height: 6px;
  border-bottom: 1px solid #c8c8c8;
  margin: -3px 0 3px;
}

.statusbar {
  height: 26px;
  padding: 2px 0 0 6px;
  line-height: 24px;
  font-family: "Noto Sans", sans-serif;
  font-size: 14px;
}

.taskbar {
  display: flex;
  height: 50px;
  background: linear-gradient(90deg, #182543, #1c2a44);
  color: #fff;
  font-family: "Noto Sans", sans-serif;
}

.taskbar button {
  border: none;
  background: none;
}

.taskbar .start {
  width: 60px;
}

.start svg {
  width: 20px;
  height: 20px;
}

.search {
  display: flex;
  align-items: center;
  gap: 15px;
  width: 430px;
  padding-left: 14px;
  border: 1px solid #c4c4c4;
  background: #f2f2f2;
}

.search svg {
  width: 20px;
  height: 20px;
}

.search input {
  flex: 1;
  border: none;
  background: none;
  color: #000;
  font-size: 18px;
}

.search input::placeholder {
  color: #3a3a3a;
  opacity: 1;
}

.task-view {
  width: 63px;
}

.task-view svg {
  width: 22px;
  height: 20px;
}

.taskbar .app-btn {
  display: flex;
  align-items: center;
  justify-content: center;
  width: 62px;
  background: linear-gradient(#76b9ed, #76b9ed) center bottom / 0 3px no-repeat;
}

.taskbar .open {
  background-size: 51px 3px;
}

.taskbar .more {
  background-image: linear-gradient(90deg, #76b9ed 40px, #5f93c4 40px);
}

.taskbar .active {
  background-color: #475269;
  background-size: 100% 3px;
}

.app-btn svg {
  width: 28px;
  height: 28px;
}

.tray {
  display: flex;
  align-items: center;
  gap: 12px;
  margin-left: auto;
  margin-right: 5px;
  padding-right: 15px;
  border-right: 1px solid #5d6778;
  font-size: 14px;
}

.clock {
  display: flex;
  flex-direction: column;
  align-items: center;
  width: 76px;
  line-height: 23px;
}

.notify {
  position: relative;
  width: 30px;
  height: 30px;
  margin-left: 6px;
  text-align: left;
}

.notify svg {
  width: 20px;
  height: 20px;
}

.badge {
  position: absolute;
  right: 0;
  bottom: 0;
  width: 20px;
  border: 1px solid #8a8f98;
  border-radius: 50%;
  background: #2b2f38;
  line-height: 18px;
  text-align: center;
  font-size: 12px;
  font-weight: bold;
}
</style>
